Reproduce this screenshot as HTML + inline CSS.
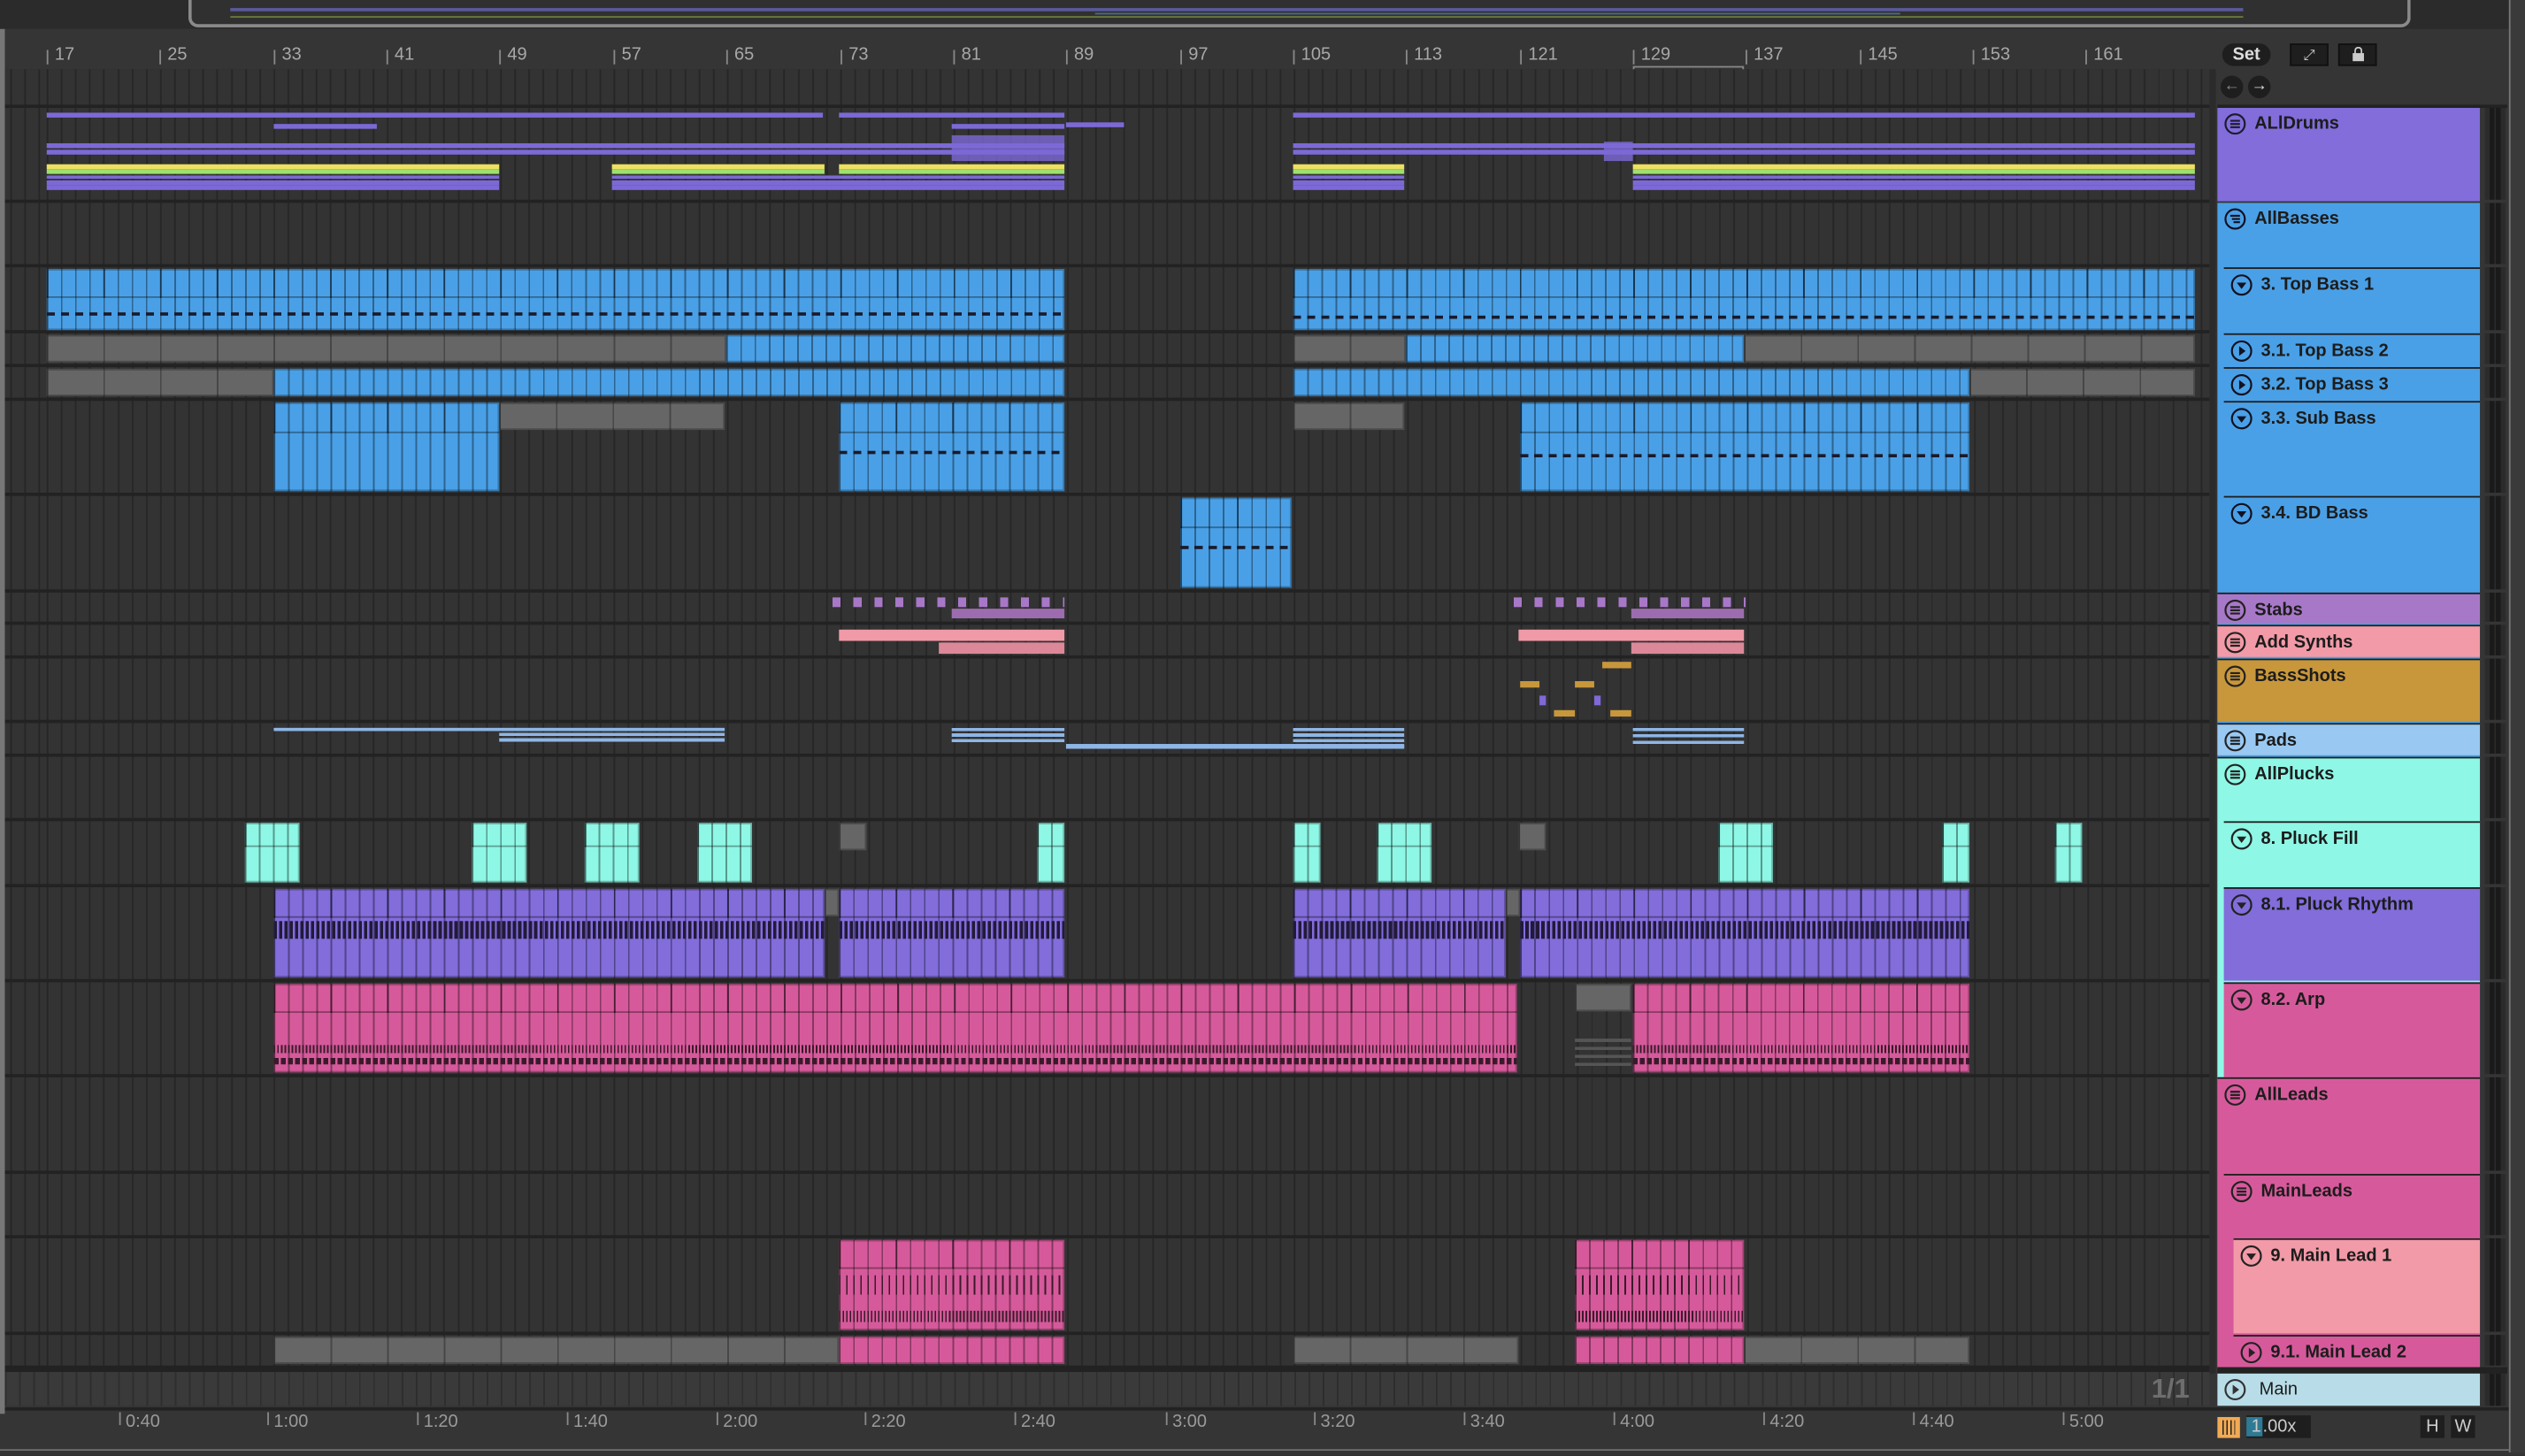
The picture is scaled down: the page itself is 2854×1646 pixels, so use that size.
<!DOCTYPE html>
<html><head><meta charset="utf-8">
<style>
html,body{margin:0;padding:0;background:#2a2a2a;overflow:hidden;width:2854px;height:1642px}
#w{position:absolute;left:0;top:0;width:1568px;height:902px;transform:scale(1.82015,1.8204);transform-origin:0 0;font-family:"Liberation Sans",sans-serif;background:#353535}
.a{position:absolute}
#grid{position:absolute;left:3px;top:43px;width:1369px;height:809px;background-color:#333;background-image:repeating-linear-gradient(90deg,#262626 0 1px,transparent 1px 8.8px);background-position:26px 0}
.sep{position:absolute;left:3px;width:1369px;height:2px;background:#222}
.c{position:absolute;background-image:repeating-linear-gradient(90deg,rgba(0,0,0,.38) 0 1px,transparent 1px 8.8px);box-shadow:inset 0 0 0 1px rgba(0,0,0,.25)}
.b{background-color:#4aa0e6}.g{background-color:#666;background-image:repeating-linear-gradient(90deg,rgba(0,0,0,.3) 0 1px,transparent 1px 35.2px)!important}.p{background-color:#826ddb}.k{background-color:#d65a9b}.cy{background-color:#8ef7e5}.lp{background-color:#f29aa7}
.band{position:absolute;left:0;right:0;top:0;border-bottom:1px solid rgba(0,0,0,.35);background-image:repeating-linear-gradient(90deg,rgba(0,0,0,.45) 0 1px,transparent 1px 35.2px)}
.ln{position:absolute;height:3px}
.h{position:absolute;font-size:11px;font-weight:bold;color:#1c1c1c;box-sizing:border-box;border-top:1px solid #1e1e1e;white-space:nowrap}
.h svg{position:absolute;left:4px;top:3px}
.h span{position:absolute;left:23px;top:4px}
.m{position:absolute;left:1543px;width:13px;background:#2b2b2b;background-image:linear-gradient(90deg,transparent 0 3px,#1a1a1a 3px 6px,transparent 6px 7px,#1a1a1a 7px 10px,transparent 10px)}
.rl{position:absolute;top:28px;font-size:11px;color:#a8a8a8}
.rl:before{content:"";position:absolute;left:-5px;top:3px;width:1px;height:9px;background:#888}
.tl{position:absolute;top:877px;font-size:11px;color:#9a9a9a}
.tl:before{content:"";position:absolute;left:-4px;top:0;width:1px;height:8px;background:#888}
.nt{position:absolute;left:0;right:0;height:2px;background-image:repeating-linear-gradient(90deg,#1a1a2a 0 5px,transparent 5px 8.8px)}
</style></head><body><div id="w">
<div class="a" style="left:0;top:0;width:1568px;height:18px;background:#2b2b2b"></div>
<div class="a" style="left:117px;top:0;width:1376px;height:15px;border:2px solid #8a8a8a;border-top:none;border-radius:0 0 6px 6px;background:#303030"></div>
<div class="a" style="left:143px;top:5px;width:1250px;height:2px;background:#5a5a9a"></div>
<div class="a" style="left:143px;top:10px;width:1250px;height:1px;background:#6a7a3a"></div>
<div class="a" style="left:680px;top:8px;width:500px;height:1px;background:#4a6a8a"></div>
<div class="a" style="left:0;top:18px;width:1375px;height:25px;background:#353535"></div>
<div class="rl" style="left:34px">17</div><div class="rl" style="left:104px">25</div><div class="rl" style="left:175px">33</div><div class="rl" style="left:245px">41</div><div class="rl" style="left:315px">49</div><div class="rl" style="left:386px">57</div><div class="rl" style="left:456px">65</div><div class="rl" style="left:527px">73</div><div class="rl" style="left:597px">81</div><div class="rl" style="left:667px">89</div><div class="rl" style="left:738px">97</div><div class="rl" style="left:808px">105</div><div class="rl" style="left:878px">113</div><div class="rl" style="left:949px">121</div><div class="rl" style="left:1019px">129</div><div class="rl" style="left:1089px">137</div><div class="rl" style="left:1160px">145</div><div class="rl" style="left:1230px">153</div><div class="rl" style="left:1300px">161</div>
<div class="a" style="left:1014px;top:41px;width:69px;height:9px;border:1px solid #888;box-sizing:border-box"></div>
<div class="a" style="left:1380px;top:27px;width:30px;height:14px;border-radius:8px;background:#1e1e1e;color:#ddd;font-size:11px;font-weight:bold;text-align:center;line-height:14px">Set</div>
<div class="a" style="left:1422px;top:27px;width:24px;height:14px;background:#1e1e1e;border:1px solid #111;box-sizing:border-box;color:#ccc;font-size:9px;text-align:center;line-height:12px">⤢</div>
<div class="a" style="left:1452px;top:27px;width:24px;height:14px;background:#1e1e1e;border:1px solid #111;box-sizing:border-box"><div class="a" style="left:8px;top:5px;width:7px;height:5px;background:#ccc"></div><div class="a" style="left:9px;top:1px;width:3px;height:4px;border:1px solid #ccc;border-bottom:none;border-radius:3px 3px 0 0"></div></div>
<div class="a" style="left:1379px;top:47px;width:14px;height:14px;border-radius:7px;background:#1e1e1e;color:#888;font-size:10px;text-align:center;line-height:14px">←</div>
<div class="a" style="left:1396px;top:47px;width:14px;height:14px;border-radius:7px;background:#1e1e1e;color:#ddd;font-size:10px;text-align:center;line-height:14px">→</div>
<div class="a" style="left:1372px;top:43px;width:4px;height:810px;background:#2b2b2b"></div>
<div class="a" style="left:1377px;top:65px;width:180px;height:2px;background:#222"></div>

<div id="grid"></div>
<div class="sep" style="top:65px"></div><div class="sep" style="top:124px"></div><div class="sep" style="top:164px"></div><div class="sep" style="top:205px"></div><div class="sep" style="top:226px"></div><div class="sep" style="top:247px"></div><div class="sep" style="top:306px"></div><div class="sep" style="top:366px"></div><div class="sep" style="top:386px"></div><div class="sep" style="top:407px"></div><div class="sep" style="top:447px"></div><div class="sep" style="top:468px"></div><div class="sep" style="top:508px"></div><div class="sep" style="top:549px"></div><div class="sep" style="top:608px"></div><div class="sep" style="top:667px"></div><div class="sep" style="top:727px"></div><div class="sep" style="top:767px"></div><div class="sep" style="top:827px"></div><div class="sep" style="top:848px;height:4px"></div>

<div class="ln" style="left:29px;top:70px;width:482px;background:#7d69d6"></div><div class="ln" style="left:521px;top:70px;width:140px;background:#7d69d6"></div><div class="ln" style="left:803px;top:70px;width:560px;background:#7d69d6"></div>
<div class="ln" style="left:170px;top:77px;width:64px;background:#7d69d6"></div><div class="ln" style="left:591px;top:77px;width:70px;background:#7d69d6"></div><div class="ln" style="left:662px;top:76px;width:36px;background:#7d69d6"></div>
<div class="ln" style="left:29px;top:89px;width:632px;background:#7d69d6"></div><div class="ln" style="left:803px;top:89px;width:560px;background:#7d69d6"></div>
<div class="ln" style="left:29px;top:93px;width:632px;background:#7d69d6"></div><div class="ln" style="left:803px;top:93px;width:560px;background:#7d69d6"></div>
<div class="ln" style="left:29px;top:102px;width:281px;background:#eee060"></div><div class="ln" style="left:380px;top:102px;width:132px;background:#eee060"></div><div class="ln" style="left:521px;top:102px;width:140px;background:#eee060"></div><div class="ln" style="left:803px;top:102px;width:69px;background:#eee060"></div><div class="ln" style="left:1014px;top:102px;width:349px;background:#eee060"></div>
<div class="ln" style="left:29px;top:105px;width:281px;background:#9ee070"></div><div class="ln" style="left:380px;top:105px;width:132px;background:#9ee070"></div><div class="ln" style="left:521px;top:105px;width:140px;background:#9ee070"></div><div class="ln" style="left:803px;top:105px;width:69px;background:#9ee070"></div><div class="ln" style="left:1014px;top:105px;width:349px;background:#9ee070"></div>
<div class="ln" style="left:29px;top:109px;width:281px;height:2px;background:#7d69d6"></div><div class="ln" style="left:380px;top:109px;width:281px;height:2px;background:#7d69d6"></div><div class="ln" style="left:803px;top:109px;width:69px;height:2px;background:#7d69d6"></div><div class="ln" style="left:1014px;top:109px;width:349px;height:2px;background:#7d69d6"></div>
<div class="ln" style="left:29px;top:112px;width:281px;background:#7d69d6"></div><div class="ln" style="left:380px;top:112px;width:281px;background:#7d69d6"></div><div class="ln" style="left:803px;top:112px;width:69px;background:#7d69d6"></div><div class="ln" style="left:1014px;top:112px;width:349px;background:#7d69d6"></div>
<div class="ln" style="left:29px;top:115px;width:281px;background:#7d69d6"></div><div class="ln" style="left:380px;top:115px;width:281px;background:#7d69d6"></div><div class="ln" style="left:803px;top:115px;width:69px;background:#7d69d6"></div><div class="ln" style="left:1014px;top:115px;width:349px;background:#7d69d6"></div>
<div class="ln" style="left:591px;top:84px;width:70px;height:16px;background:#7d69d6;opacity:.8"></div>
<div class="ln" style="left:996px;top:88px;width:18px;height:12px;background:#7d69d6;opacity:.8"></div>

<div class="c b" style="left:29px;top:167px;width:632px;height:38px"><div class="band" style="height:17px"></div><div class="nt" style="top:27px"></div></div>
<div class="c b" style="left:803px;top:167px;width:560px;height:38px"><div class="band" style="height:17px"></div><div class="nt" style="top:29px"></div></div>
<div class="c g" style="left:29px;top:208px;width:422px;height:17px"></div><div class="c b" style="left:451px;top:208px;width:210px;height:17px"></div>
<div class="c g" style="left:803px;top:208px;width:70px;height:17px"></div><div class="c b" style="left:873px;top:208px;width:210px;height:17px"></div><div class="c g" style="left:1083px;top:208px;width:280px;height:17px"></div>
<div class="c g" style="left:29px;top:229px;width:141px;height:17px"></div><div class="c b" style="left:170px;top:229px;width:491px;height:17px"></div>
<div class="c b" style="left:803px;top:229px;width:420px;height:17px"></div><div class="c g" style="left:1223px;top:229px;width:140px;height:17px"></div>
<div class="c b" style="left:170px;top:250px;width:140px;height:55px"><div class="band" style="height:18px"></div></div>
<div class="c g" style="left:310px;top:250px;width:140px;height:17px"></div>
<div class="c b" style="left:521px;top:250px;width:140px;height:55px"><div class="band" style="height:18px"></div><div class="nt" style="top:30px"></div></div>
<div class="c g" style="left:803px;top:250px;width:69px;height:17px"></div>
<div class="c b" style="left:944px;top:250px;width:279px;height:55px"><div class="band" style="height:18px"></div><div class="nt" style="top:32px"></div></div>
<div class="c b" style="left:733px;top:309px;width:69px;height:56px"><div class="band" style="height:18px"></div><div class="nt" style="top:30px"></div></div>
<div class="a" style="left:517px;top:371px;width:144px;height:6px;background-image:repeating-linear-gradient(90deg,#a878c8 0 5px,transparent 5px 13px)"></div>
<div class="a" style="left:591px;top:378px;width:70px;height:6px;background:#9c6cb0"></div>
<div class="a" style="left:940px;top:371px;width:144px;height:6px;background-image:repeating-linear-gradient(90deg,#a878c8 0 5px,transparent 5px 13px)"></div>
<div class="a" style="left:1013px;top:378px;width:70px;height:6px;background:#9c6cb0"></div>
<div class="a" style="left:521px;top:391px;width:140px;height:7px;background:#f09aa7"></div><div class="a" style="left:583px;top:399px;width:78px;height:7px;background:#dc8898"></div>
<div class="a" style="left:943px;top:391px;width:140px;height:7px;background:#f09aa7"></div><div class="a" style="left:1013px;top:399px;width:70px;height:7px;background:#dc8898"></div>
<div class="a" style="left:944px;top:423px;width:12px;height:4px;background:#c8973c"></div><div class="a" style="left:978px;top:423px;width:12px;height:4px;background:#c8973c"></div><div class="a" style="left:995px;top:411px;width:18px;height:4px;background:#c8973c"></div><div class="a" style="left:965px;top:441px;width:13px;height:4px;background:#c8973c"></div><div class="a" style="left:1000px;top:441px;width:13px;height:4px;background:#c8973c"></div><div class="a" style="left:956px;top:432px;width:4px;height:6px;background:#8068d8"></div><div class="a" style="left:990px;top:432px;width:4px;height:6px;background:#8068d8"></div>
<div class="a" style="left:170px;top:452px;width:280px;height:2px;background:#8eb6e6"></div><div class="a" style="left:310px;top:455px;width:140px;height:7px;background-image:repeating-linear-gradient(#8eb6e6 0 2px,transparent 2px 3.5px)"></div>
<div class="a" style="left:591px;top:452px;width:70px;height:9px;background-image:repeating-linear-gradient(#8eb6e6 0 2px,transparent 2px 3.5px)"></div><div class="a" style="left:662px;top:462px;width:210px;height:3px;background:#8eb6e6"></div><div class="a" style="left:803px;top:452px;width:69px;height:13px;background-image:repeating-linear-gradient(#8eb6e6 0 2px,transparent 2px 3.5px)"></div>
<div class="a" style="left:1014px;top:452px;width:69px;height:10px;background-image:repeating-linear-gradient(#8eb6e6 0 2px,transparent 2px 4px)"></div>
<div class="c cy" style="left:152px;top:511px;width:34px;height:37px"><div class="band" style="height:14px"></div></div>
<div class="c cy" style="left:293px;top:511px;width:34px;height:37px"><div class="band" style="height:14px"></div></div>
<div class="c cy" style="left:363px;top:511px;width:34px;height:37px"><div class="band" style="height:14px"></div></div>
<div class="c cy" style="left:433px;top:511px;width:34px;height:37px"><div class="band" style="height:14px"></div></div>
<div class="c g" style="left:521px;top:511px;width:17px;height:17px"></div>
<div class="c cy" style="left:644px;top:511px;width:17px;height:37px"><div class="band" style="height:14px"></div></div>
<div class="c cy" style="left:803px;top:511px;width:17px;height:37px"><div class="band" style="height:14px"></div></div>
<div class="c cy" style="left:855px;top:511px;width:34px;height:37px"><div class="band" style="height:14px"></div></div>
<div class="c g" style="left:943px;top:511px;width:17px;height:17px"></div>
<div class="c cy" style="left:1067px;top:511px;width:34px;height:37px"><div class="band" style="height:14px"></div></div>
<div class="c cy" style="left:1206px;top:511px;width:17px;height:37px"><div class="band" style="height:14px"></div></div>
<div class="c cy" style="left:1276px;top:511px;width:17px;height:37px"><div class="band" style="height:14px"></div></div>
<div class="c p" style="left:170px;top:552px;width:342px;height:55px"><div class="band" style="height:17px"></div><div class="a" style="left:0;right:0;top:20px;height:11px;background-image:repeating-linear-gradient(90deg,#221a3a 0 2px,transparent 2px 3.3px)"></div></div>
<div class="c g" style="left:512px;top:552px;width:9px;height:17px"></div>
<div class="c p" style="left:521px;top:552px;width:140px;height:55px"><div class="band" style="height:17px"></div><div class="a" style="left:0;right:0;top:20px;height:11px;background-image:repeating-linear-gradient(90deg,#221a3a 0 2px,transparent 2px 3.3px)"></div></div>
<div class="c p" style="left:803px;top:552px;width:132px;height:55px"><div class="band" style="height:17px"></div><div class="a" style="left:0;right:0;top:20px;height:11px;background-image:repeating-linear-gradient(90deg,#221a3a 0 2px,transparent 2px 3.3px)"></div></div>
<div class="c g" style="left:935px;top:552px;width:9px;height:17px"></div>
<div class="c p" style="left:944px;top:552px;width:279px;height:55px"><div class="band" style="height:17px"></div><div class="a" style="left:0;right:0;top:20px;height:11px;background-image:repeating-linear-gradient(90deg,#221a3a 0 2px,transparent 2px 3.3px)"></div></div>
<div class="c k" style="left:170px;top:611px;width:772px;height:55px"><div class="band" style="height:17px"></div><div class="a" style="left:0;right:0;top:38px;height:5px;background-image:repeating-linear-gradient(90deg,#3a1a2a 0 1px,transparent 1px 2.2px)"></div><div class="a" style="left:0;right:0;top:46px;height:4px;background-image:repeating-linear-gradient(90deg,#3a1a2a 0 3px,transparent 3px 4.4px)"></div></div>
<div class="c g" style="left:978px;top:611px;width:35px;height:17px"></div>
<div class="a" style="left:978px;top:645px;width:35px;height:18px;background-image:repeating-linear-gradient(#555 0 2px,transparent 2px 5px)"></div>
<div class="c k" style="left:1014px;top:611px;width:209px;height:55px"><div class="band" style="height:17px"></div><div class="a" style="left:0;right:0;top:38px;height:5px;background-image:repeating-linear-gradient(90deg,#3a1a2a 0 1px,transparent 1px 2.2px)"></div><div class="a" style="left:0;right:0;top:46px;height:4px;background-image:repeating-linear-gradient(90deg,#3a1a2a 0 3px,transparent 3px 4.4px)"></div></div>
<div class="c k" style="left:521px;top:770px;width:140px;height:56px"><div class="band" style="height:17px"></div><div class="a" style="left:0;right:0;top:22px;height:12px;background-image:repeating-linear-gradient(90deg,#3a1a2a 0 1px,transparent 1px 4.4px)"></div><div class="a" style="left:0;right:0;top:44px;height:7px;background-image:repeating-linear-gradient(90deg,#3a1a2a 0 1px,transparent 1px 2.2px)"></div></div>
<div class="c k" style="left:978px;top:770px;width:105px;height:56px"><div class="band" style="height:17px"></div><div class="a" style="left:0;right:0;top:22px;height:12px;background-image:repeating-linear-gradient(90deg,#3a1a2a 0 1px,transparent 1px 4.4px)"></div><div class="a" style="left:0;right:0;top:44px;height:7px;background-image:repeating-linear-gradient(90deg,#3a1a2a 0 1px,transparent 1px 2.2px)"></div></div>
<div class="c g" style="left:170px;top:830px;width:351px;height:17px"></div><div class="c k" style="left:521px;top:830px;width:140px;height:17px"></div>
<div class="c g" style="left:803px;top:830px;width:140px;height:17px"></div><div class="c k" style="left:978px;top:830px;width:105px;height:17px"></div><div class="c g" style="left:1083px;top:830px;width:140px;height:17px"></div>
<div class="a" style="left:3px;top:852px;width:1369px;height:21px;background-color:#3a3a3a;background-image:repeating-linear-gradient(90deg,#2e2e2e 0 1px,transparent 1px 8.8px)"></div>
<div class="a" style="left:1336px;top:853px;font-size:17px;font-weight:bold;color:#6e6e6e">1/1</div>
<div class="a" style="left:0;top:874px;width:1568px;height:28px;background:#353535;border-top:2px solid #222"></div>
<div class="tl" style="left:78px">0:40</div><div class="tl" style="left:170px">1:00</div><div class="tl" style="left:263px">1:20</div><div class="tl" style="left:356px">1:40</div><div class="tl" style="left:449px">2:00</div><div class="tl" style="left:541px">2:20</div><div class="tl" style="left:634px">2:40</div><div class="tl" style="left:728px">3:00</div><div class="tl" style="left:820px">3:20</div><div class="tl" style="left:913px">3:40</div><div class="tl" style="left:1006px">4:00</div><div class="tl" style="left:1099px">4:20</div><div class="tl" style="left:1192px">4:40</div><div class="tl" style="left:1285px">5:00</div>
<div class="a" style="left:1377px;top:880px;width:14px;height:13px;background:#f2aa55"></div>
<div class="a" style="left:1380px;top:882px;width:8px;height:9px;background-image:repeating-linear-gradient(90deg,#222 0 1px,transparent 1px 2.5px)"></div>
<div class="a" style="left:1395px;top:879px;width:40px;height:14px;background:#1e1e1e;font-size:11px;color:#ccc;line-height:14px"><span style="background:#2e7a95;padding:0 1px 0 3px">1</span>.00x</div>
<div class="a" style="left:1503px;top:879px;width:15px;height:14px;background:#1e1e1e;font-size:11px;color:#ccc;text-align:center;line-height:14px">H</div>
<div class="a" style="left:1522px;top:879px;width:15px;height:14px;background:#1e1e1e;font-size:11px;color:#ccc;text-align:center;line-height:14px">W</div>

<div class="h" style="left:1377px;top:67px;width:163px;height:58px;background:#826ddb;border:none"><svg width="14" height="14"><circle cx="7" cy="7" r="6" fill="none" stroke="#1c1c2c" stroke-width="1.2"/><path d="M4 5h6M4 7h6M4 9h6" stroke="#1c1c2c" stroke-width="1.2"/></svg><span>ALlDrums</span></div>
<div class="h" style="left:1377px;top:126px;width:163px;height:723px;background:#4aa0e6;border:none"><svg width="14" height="14"><circle cx="7" cy="7" r="6" fill="none" stroke="#112" stroke-width="1.2"/><path d="M4 5h6M5 7h5M6 9h4" stroke="#112" stroke-width="1.2"/></svg><span>AllBasses</span></div>
<div class="h" style="left:1381px;top:166px;width:159px;height:40px;background:#4aa0e6"><svg width="14" height="14"><circle cx="7" cy="7" r="6" fill="none" stroke="#112" stroke-width="1.2"/><path d="M4 5.5h6L7 9.5z" fill="#112"/></svg><span>3. Top Bass 1</span></div>
<div class="h" style="left:1381px;top:207px;width:159px;height:20px;background:#4aa0e6"><svg width="14" height="14"><circle cx="7" cy="7" r="6" fill="none" stroke="#112" stroke-width="1.2"/><path d="M5.5 4v6L9.5 7z" fill="#112"/></svg><span>3.1. Top Bass 2</span></div>
<div class="h" style="left:1381px;top:228px;width:159px;height:20px;background:#4aa0e6"><svg width="14" height="14"><circle cx="7" cy="7" r="6" fill="none" stroke="#112" stroke-width="1.2"/><path d="M5.5 4v6L9.5 7z" fill="#112"/></svg><span>3.2. Top Bass 3</span></div>
<div class="h" style="left:1381px;top:249px;width:159px;height:58px;background:#4aa0e6"><svg width="14" height="14"><circle cx="7" cy="7" r="6" fill="none" stroke="#112" stroke-width="1.2"/><path d="M4 5.5h6L7 9.5z" fill="#112"/></svg><span>3.3. Sub Bass</span></div>
<div class="h" style="left:1381px;top:308px;width:159px;height:59px;background:#4aa0e6"><svg width="14" height="14"><circle cx="7" cy="7" r="6" fill="none" stroke="#112" stroke-width="1.2"/><path d="M4 5.5h6L7 9.5z" fill="#112"/></svg><span>3.4. BD Bass</span></div>
<div class="h" style="left:1377px;top:368px;width:163px;height:19px;background:#a878c8"><svg width="14" height="14"><circle cx="7" cy="7" r="6" fill="none" stroke="#222" stroke-width="1.2"/><path d="M4 5h6M4 7h6M4 9h6" stroke="#222" stroke-width="1.2"/></svg><span>Stabs</span></div>
<div class="h" style="left:1377px;top:388px;width:163px;height:20px;background:#f29aa7"><svg width="14" height="14"><circle cx="7" cy="7" r="6" fill="none" stroke="#222" stroke-width="1.2"/><path d="M4 5h6M4 7h6M4 9h6" stroke="#222" stroke-width="1.2"/></svg><span>Add Synths</span></div>
<div class="h" style="left:1377px;top:409px;width:163px;height:39px;background:#c8973c"><svg width="14" height="14"><circle cx="7" cy="7" r="6" fill="none" stroke="#222" stroke-width="1.2"/><path d="M4 5h6M4 7h6M4 9h6" stroke="#222" stroke-width="1.2"/></svg><span>BassShots</span></div>
<div class="h" style="left:1377px;top:449px;width:163px;height:20px;background:#99c9f2"><svg width="14" height="14"><circle cx="7" cy="7" r="6" fill="none" stroke="#222" stroke-width="1.2"/><path d="M4 5h6M4 7h6M4 9h6" stroke="#222" stroke-width="1.2"/></svg><span>Pads</span></div>
<div class="h" style="left:1377px;top:470px;width:163px;height:199px;background:#8ef7e5"><svg width="14" height="14"><circle cx="7" cy="7" r="6" fill="none" stroke="#222" stroke-width="1.2"/><path d="M4 5h6M4 7h6M4 9h6" stroke="#222" stroke-width="1.2"/></svg><span>AllPlucks</span></div>
<div class="h" style="left:1381px;top:510px;width:159px;height:40px;background:#8ef7e5"><svg width="14" height="14"><circle cx="7" cy="7" r="6" fill="none" stroke="#222" stroke-width="1.2"/><path d="M4 5.5h6L7 9.5z" fill="#222"/></svg><span>8. Pluck Fill</span></div>
<div class="h" style="left:1381px;top:551px;width:159px;height:58px;background:#826ddb"><svg width="14" height="14"><circle cx="7" cy="7" r="6" fill="none" stroke="#222" stroke-width="1.2"/><path d="M4 5.5h6L7 9.5z" fill="#222"/></svg><span>8.1. Pluck Rhythm</span></div>
<div class="h" style="left:1381px;top:610px;width:159px;height:59px;background:#d65a9b"><svg width="14" height="14"><circle cx="7" cy="7" r="6" fill="none" stroke="#222" stroke-width="1.2"/><path d="M4 5.5h6L7 9.5z" fill="#222"/></svg><span>8.2. Arp</span></div>
<div class="h" style="left:1377px;top:669px;width:163px;height:181px;background:#d65a9b"><svg width="14" height="14"><circle cx="7" cy="7" r="6" fill="none" stroke="#222" stroke-width="1.2"/><path d="M4 5h6M4 7h6M4 9h6" stroke="#222" stroke-width="1.2"/></svg><span>AllLeads</span></div>
<div class="h" style="left:1381px;top:729px;width:159px;height:121px;background:#d65a9b"><svg width="14" height="14"><circle cx="7" cy="7" r="6" fill="none" stroke="#222" stroke-width="1.2"/><path d="M4 5h6M4 7h6M4 9h6" stroke="#222" stroke-width="1.2"/></svg><span>MainLeads</span></div>
<div class="h" style="left:1387px;top:769px;width:153px;height:59px;background:#f29aa7"><svg width="14" height="14"><circle cx="7" cy="7" r="6" fill="none" stroke="#222" stroke-width="1.2"/><path d="M4 5.5h6L7 9.5z" fill="#222"/></svg><span>9. Main Lead 1</span></div>
<div class="h" style="left:1387px;top:829px;width:153px;height:20px;background:#d65a9b"><svg width="14" height="14"><circle cx="7" cy="7" r="6" fill="none" stroke="#222" stroke-width="1.2"/><path d="M5.5 4v6L9.5 7z" fill="#222"/></svg><span>9.1. Main Lead 2</span></div>
<div class="a" style="left:1377px;top:849px;width:180px;height:4px;background:#222"></div>
<div class="h" style="left:1377px;top:853px;width:163px;height:20px;background:#b8dde8;border:none;font-weight:normal"><svg width="14" height="14"><circle cx="7" cy="7" r="6" fill="none" stroke="#333" stroke-width="1.2"/><path d="M5.5 4v6L9.5 7z" fill="#333"/></svg><span style="left:26px">Main</span></div>
<div class="m" style="top:67px;height:57px"></div><div class="m" style="top:126px;height:38px"></div><div class="m" style="top:166px;height:39px"></div><div class="m" style="top:207px;height:19px"></div><div class="m" style="top:228px;height:19px"></div><div class="m" style="top:249px;height:57px"></div><div class="m" style="top:308px;height:58px"></div><div class="m" style="top:368px;height:18px"></div><div class="m" style="top:388px;height:19px"></div><div class="m" style="top:409px;height:38px"></div><div class="m" style="top:449px;height:19px"></div><div class="m" style="top:470px;height:38px"></div><div class="m" style="top:510px;height:39px"></div><div class="m" style="top:551px;height:57px"></div><div class="m" style="top:610px;height:57px"></div><div class="m" style="top:669px;height:58px"></div><div class="m" style="top:729px;height:38px"></div><div class="m" style="top:769px;height:58px"></div><div class="m" style="top:829px;height:19px"></div><div class="m" style="top:853px;height:20px"></div>
<div class="a" style="left:0;top:0;width:1566px;height:900px;border:1px solid #777;border-left:none;border-top:none;border-radius:0 0 6px 0;pointer-events:none"></div>
<div class="a" style="left:1558px;top:0;width:10px;height:902px;background:#3a3a3a;border-left:1px solid #777"></div>
<div class="a" style="left:0;top:18px;width:3px;height:860px;background:#777"></div>
</div></body></html>
